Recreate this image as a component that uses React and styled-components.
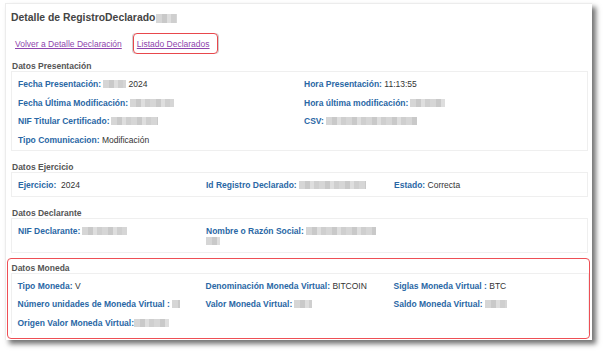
import styled, { createGlobalStyle } from "styled-components";

const Global = createGlobalStyle`
  html, body {
    margin: 0;
    background: #fff;
  }
  body {
    font-family: "Liberation Sans", Arial, sans-serif;
    font-size: 8.5px;
    color: #333;
  }
`;

const Page = styled.div`
  padding: 3px 0 0 5px;
  width: 603px;
  height: 353px;
  box-sizing: border-box;
`;

const Card = styled.div`
  width: 587px;
  height: 337px;
  box-sizing: border-box;
  background: #fff;
  border-top: 1px solid #ececec;
  border-left: 1px solid #ececec;
  box-shadow: 4px 4px 5px rgba(0, 0, 0, 0.55);
  padding: 0 4px 0 5px;
`;

const Title = styled.h1`
  margin: 0;
  padding-top: 7px;
  height: 21px;
  box-sizing: border-box;
  line-height: 14px;
  font-size: 10.4px;
  font-weight: bold;
  color: #444;
  display: flex;
  align-items: center;
  gap: 1px;
`;

const Links = styled.div`
  margin-top: 8px;
  display: flex;
  align-items: stretch;
  height: 21px;
`;

const LinkItem = styled.div`
  display: flex;
  align-items: center;
  padding: ${(p) => (p.$marked ? "0 7px 0 3px" : "0 11px 0 4px")};
  border: ${(p) => (p.$marked ? "1.5px solid #e8474c" : "none")};
  border-radius: 4px;
  box-shadow: ${(p) =>
    p.$marked ? "-1px 0 0 #cfcfcf, 1px 0 0 #cfcfcf" : "none"};
`;

const Link = styled.a`
  color: #8e44ad;
  text-decoration: underline;
  font-size: 8.5px;
  cursor: pointer;
`;

const Heading = styled.h2`
  margin: ${(p) => (p.$first ? "7px" : "11px")} 0 0 1px;
  font-size: 8.5px;
  line-height: 10px;
  font-weight: bold;
  color: #555;
`;

const Box = styled.div`
  border: 1px solid #efefef;
  border-bottom-color: ${(p) => (p.$open ? "transparent" : "#efefef")};
  padding: 3px 0 1px;
  display: grid;
  grid-template-columns: ${(p) =>
    p.$cols === 2 ? "286px 1fr" : "188px 188px 1fr"};
`;

const Cell = styled.div`
  padding: 4px 6px;
  line-height: 10.5px;
  grid-column: ${(p) => (p.$full ? "1 / -1" : "auto")};
`;

const Label = styled.span`
  color: #2a67a5;
  font-weight: bold;
`;

const Value = styled.span`
  color: #333;
`;

const Blur = styled.span`
  display: inline-block;
  width: ${(p) => p.$w}px;
  height: ${(p) => p.$h || 8}px;
  vertical-align: -1px;
  margin-left: ${(p) => (p.$gap === undefined ? 2 : p.$gap)}px;
  background: repeating-linear-gradient(
    90deg,
    #d6d6d6 0 6px,
    #c9c9c9 6px 11px,
    #dedede 11px 15px,
    #cfcfcf 15px 20px
  );
`;

const Marked = styled.div`
  margin: 5px -2px 0 -4px;
  padding: 4px 0.5px 3.5px 2.5px;
  border: 1.5px solid #ee4f55;
  border-radius: 4px;
  ${Heading} {
    margin-top: 0;
  }
`;

const Field = ({ label, children, full }) => (
  <Cell $full={full}>
    <Label>{label}</Label>
    {children}
  </Cell>
);

export default function App() {
  return (
    <Page>
      <Global />
      <Card>
        <Title>
          Detalle de RegistroDeclarado
          <Blur $w={21} $h={9} $gap={0} />
        </Title>

        <Links>
          <LinkItem>
            <Link>Volver a Detalle Declaración</Link>
          </LinkItem>
          <LinkItem $marked>
            <Link>Listado Declarados</Link>
          </LinkItem>
        </Links>

        <Heading $first>Datos Presentación</Heading>
        <Box $cols={2}>
          <Field label="Fecha Presentación:">
            <Blur $w={23} />
            <Value> 2024</Value>
          </Field>
          <Field label="Hora Presentación:">
            <Value> 11:13:55</Value>
          </Field>
          <Field label="Fecha Última Modificación:">
            <Blur $w={44} />
          </Field>
          <Field label="Hora última modificación:">
            <Blur $w={35} />
          </Field>
          <Field label="NIF Titular Certificado:">
            <Blur $w={47} />
          </Field>
          <Field label="CSV:">
            <Blur $w={91} />
          </Field>
          <Field label="Tipo Comunicacion:" full>
            <Value> Modificación</Value>
          </Field>
        </Box>

        <Heading>Datos Ejercicio</Heading>
        <Box $cols={3}>
          <Field label="Ejercicio:">
            <Value>&nbsp; 2024</Value>
          </Field>
          <Field label="Id Registro Declarado:">
            <Blur $w={67} />
          </Field>
          <Field label="Estado:">
            <Value> Correcta</Value>
          </Field>
        </Box>

        <Heading>Datos Declarante</Heading>
        <Box $cols={3}>
          <Field label="NIF Declarante:">
            <Blur $w={45} />
          </Field>
          <Field label="Nombre o Razón Social:">
            <Blur $w={70} /> <Blur $w={14} $gap={0} />
          </Field>
          <Cell />
        </Box>

        <Marked>
          <Heading>Datos Moneda</Heading>
          <Box $cols={3} $open>
            <Field label="Tipo Moneda:">
              <Value> V</Value>
            </Field>
            <Field label="Denominación Moneda Virtual:">
              <Value> BITCOIN</Value>
            </Field>
            <Field label="Siglas Moneda Virtual :">
              <Value> BTC</Value>
            </Field>
            <Field label="Número unidades de Moneda Virtual :">
              <Blur $w={8} />
            </Field>
            <Field label="Valor Moneda Virtual:">
              <Blur $w={18} />
            </Field>
            <Field label="Saldo Moneda Virtual:">
              <Blur $w={22} />
            </Field>
            <Field label="Origen Valor Moneda Virtual:" full>
              <Blur $w={35} $gap={0} />
            </Field>
          </Box>
        </Marked>
      </Card>
    </Page>
  );
}
